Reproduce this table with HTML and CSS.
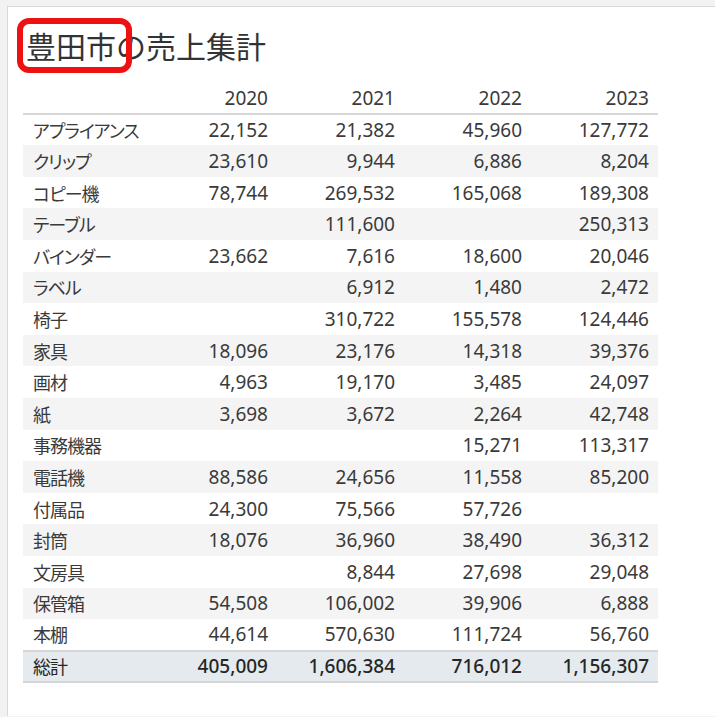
FILE: index.html
```html
<!DOCTYPE html>
<html lang="ja">
<head>
<meta charset="utf-8">
<title>豊田市の売上集計</title>
<link rel="stylesheet" href="styles.css">
</head>
<body>
<div class="frame">
  <h1 class="title">豊田市の売上集計</h1>
  <div class="highlight"></div>
  <table class="sales">
    <thead>
      <tr><th class="label"></th><th>2020</th><th>2021</th><th>2022</th><th>2023</th></tr>
    </thead>
    <tbody>
      <tr><td class="label">アプライアンス</td><td>22,152</td><td>21,382</td><td>45,960</td><td>127,772</td></tr>
      <tr><td class="label">クリップ</td><td>23,610</td><td>9,944</td><td>6,886</td><td>8,204</td></tr>
      <tr><td class="label">コピー機</td><td>78,744</td><td>269,532</td><td>165,068</td><td>189,308</td></tr>
      <tr><td class="label">テーブル</td><td></td><td>111,600</td><td></td><td>250,313</td></tr>
      <tr><td class="label">バインダー</td><td>23,662</td><td>7,616</td><td>18,600</td><td>20,046</td></tr>
      <tr><td class="label">ラベル</td><td></td><td>6,912</td><td>1,480</td><td>2,472</td></tr>
      <tr><td class="label">椅子</td><td></td><td>310,722</td><td>155,578</td><td>124,446</td></tr>
      <tr><td class="label">家具</td><td>18,096</td><td>23,176</td><td>14,318</td><td>39,376</td></tr>
      <tr><td class="label">画材</td><td>4,963</td><td>19,170</td><td>3,485</td><td>24,097</td></tr>
      <tr><td class="label">紙</td><td>3,698</td><td>3,672</td><td>2,264</td><td>42,748</td></tr>
      <tr><td class="label">事務機器</td><td></td><td></td><td>15,271</td><td>113,317</td></tr>
      <tr><td class="label">電話機</td><td>88,586</td><td>24,656</td><td>11,558</td><td>85,200</td></tr>
      <tr><td class="label">付属品</td><td>24,300</td><td>75,566</td><td>57,726</td><td></td></tr>
      <tr><td class="label">封筒</td><td>18,076</td><td>36,960</td><td>38,490</td><td>36,312</td></tr>
      <tr><td class="label">文房具</td><td></td><td>8,844</td><td>27,698</td><td>29,048</td></tr>
      <tr><td class="label">保管箱</td><td>54,508</td><td>106,002</td><td>39,906</td><td>6,888</td></tr>
      <tr><td class="label">本棚</td><td>44,614</td><td>570,630</td><td>111,724</td><td>56,760</td></tr>
    </tbody>
    <tfoot>
      <tr><td class="label">総計</td><td>405,009</td><td>1,606,384</td><td>716,012</td><td>1,156,307</td></tr>
    </tfoot>
  </table>
</div>
</body>
</html>
```

FILE: styles.css
```css
html, body {
  margin: 0;
  padding: 0;
  background: #f2f2f2;
}

.frame {
  position: relative;
  margin: 6px 0 0 7px;
  border-top: 1px solid #d9d9d9;
  border-left: 1px solid #d9d9d9;
  background: #ffffff;
  height: 710px;
  box-sizing: border-box;
  padding-top: 19px;
}

.title {
  margin: 0 0 18px 18px;
  font-family: "Noto Sans CJK JP", sans-serif;
  font-weight: 400;
  font-size: 30px;
  line-height: 38px;
  color: #333333;
}

.highlight {
  position: absolute;
  left: 9px;
  top: 11px;
  width: 115px;
  height: 55px;
  box-sizing: border-box;
  border: 6px solid #ee1111;
  border-radius: 12px;
}

.sales {
  margin-left: 15px;
  border-collapse: collapse;
  table-layout: fixed;
  width: 635px;
  font-family: "Noto Sans", "Noto Sans CJK JP", sans-serif;
  font-size: 19px;
  color: #3a3a3a;
}

.sales th,
.sales td {
  width: 127px;
  height: 31.6px;
  padding: 0 9px 0 0;
  text-align: right;
  white-space: nowrap;
  box-sizing: border-box;
  font-weight: 400;
}

.sales th {
  padding-top: 2px;
}

.sales .label {
  text-align: left;
  padding: 0 0 0 10px;
  font-family: "Noto Sans CJK JP", sans-serif;
  font-feature-settings: "palt";
  font-size: 18px;
  letter-spacing: -1px;
}

.sales thead tr {
  border-bottom: 2px solid #d6d6d6;
}

.sales tbody tr:nth-child(even) {
  background: #f4f4f4;
}

.sales tfoot tr {
  background: #e4eaee;
  border-top: 2px solid #d6d6d6;
  border-bottom: 2px solid #d6d6d6;
}

.sales tfoot td {
  color: #262626;
  font-weight: 500;
}

.sales tfoot td.label {
  font-weight: 400;
}
```
